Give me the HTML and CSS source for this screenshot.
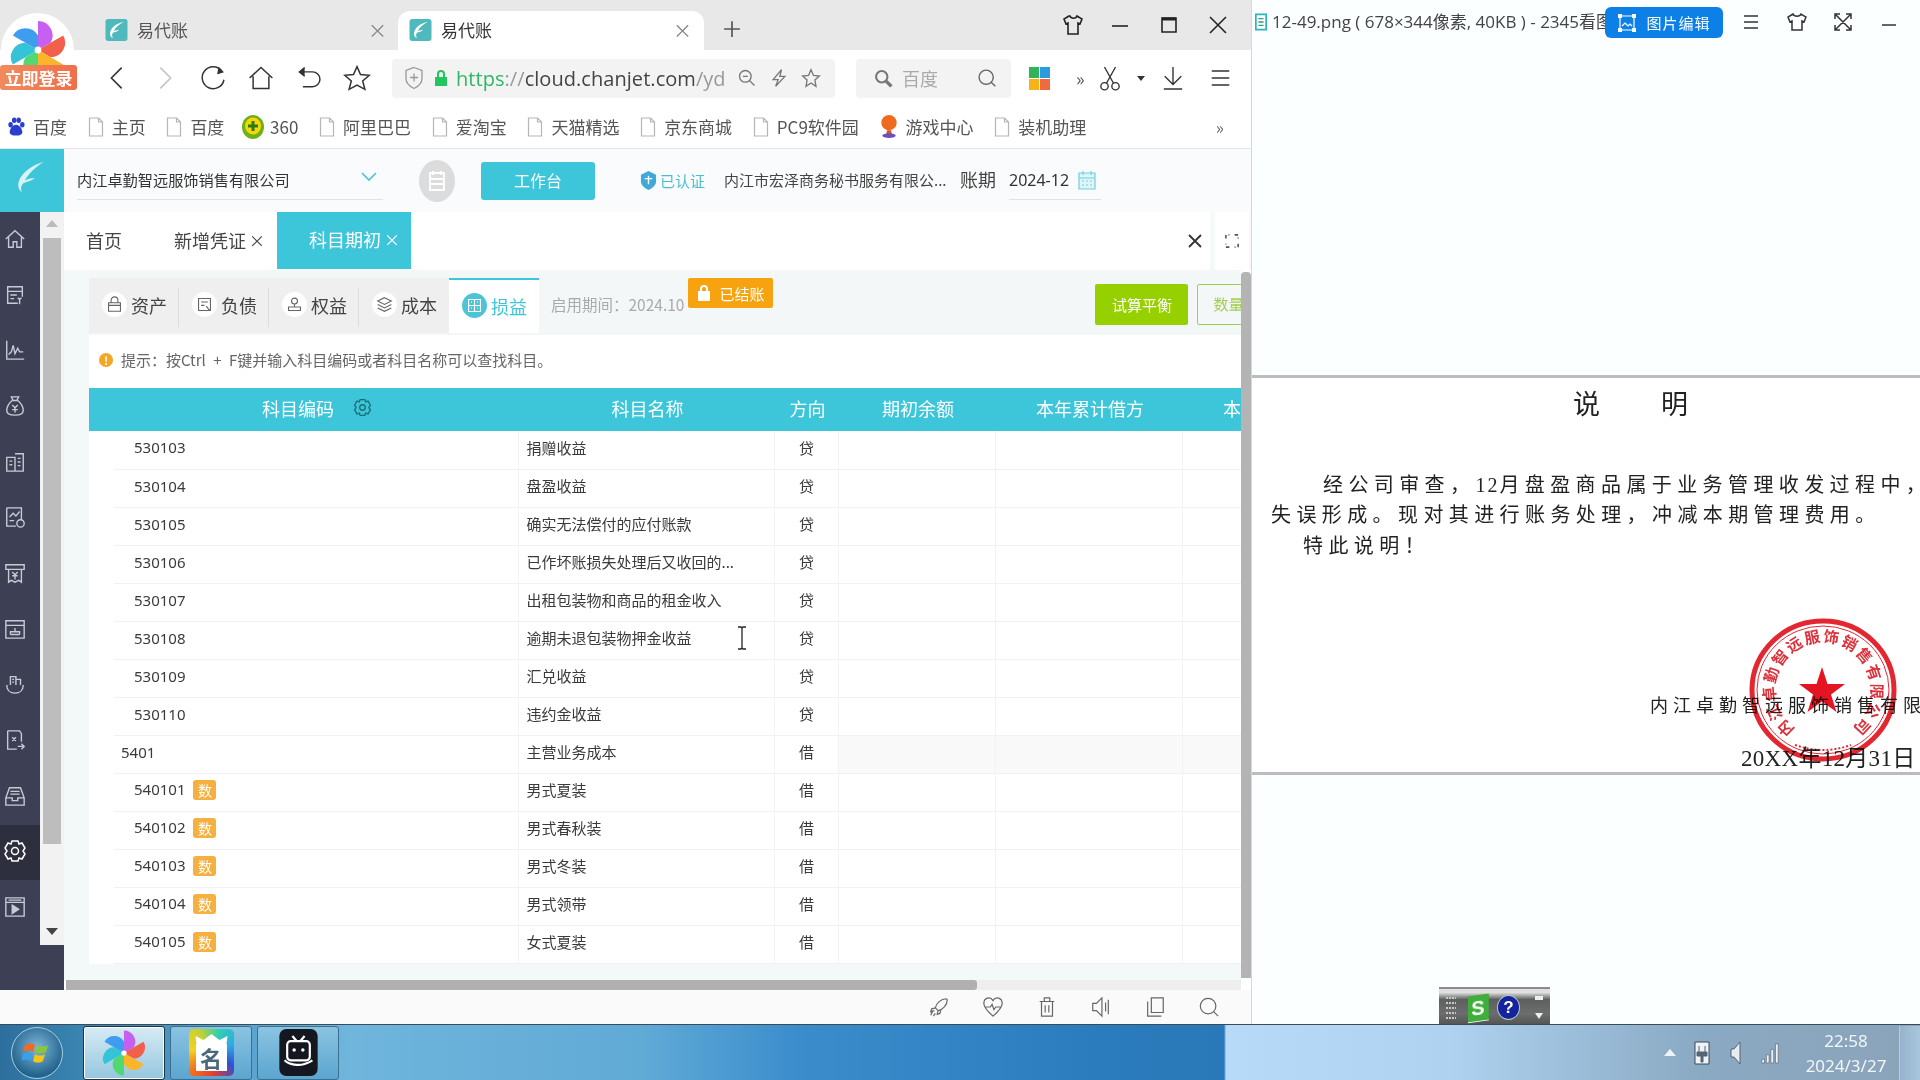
FILE: index.html
```html
<!DOCTYPE html>
<html lang="zh-CN">
<head>
<meta charset="utf-8">
<title>易代账</title>
<link rel="stylesheet" href="styles.css">
</head>
<body>
<svg class="defs" width="0" height="0" aria-hidden="true">
  <defs>
    <symbol id="feather" viewBox="0 0 24 24">
      <rect width="24" height="24" rx="3" fill="#4fb9bd"/>
      <path d="M20 3C12 5 6 9 5 15c-.4 3 1 5 3 6-1-2-1-4 0-6 2-1 5-1 7-3-2 0-4 .5-6 1 2-4 6-7 11-10z" fill="#fff"/>
    </symbol>
    <symbol id="doc" viewBox="0 0 16 20">
      <path d="M1.5 1h9l4 4v14h-13zM10.500 1v4h4" fill="#fff" stroke="#b5b5b5" stroke-width="1.200"/>
    </symbol>
    <symbol id="pinwheel" viewBox="-32 -32 64 64">
      <path d="M0 0L0-30A15 15 0 0 1 13-7.500Z" fill="#c75ff0"/>
      <path d="M0 0L0-30A15 15 0 0 1 13-7.500Z" fill="#f2604c" transform="rotate(60)"/>
      <path d="M0 0L0-30A15 15 0 0 1 13-7.500Z" fill="#fab52a" transform="rotate(120)"/>
      <path d="M0 0L0-30A15 15 0 0 1 13-7.500Z" fill="#52d873" transform="rotate(180)"/>
      <path d="M0 0L0-30A15 15 0 0 1 13-7.500Z" fill="#35c3d8" transform="rotate(240)"/>
      <path d="M0 0L0-30A15 15 0 0 1 13-7.500Z" fill="#3f9df0" transform="rotate(300)"/>
      <circle r="3.500" fill="#fff"/>
    </symbol>
  </defs>
</svg>

<div class="screen">
  <div class="desktop">
    <section class="browser">
      <header class="titlebar">
        <div class="btab">
          <svg class="btab-icon"><use href="#feather"/></svg>
          <span class="btab-title">易代账</span>
          <span class="btab-close">×</span>
        </div>
        <div class="btab btab-active">
          <svg class="btab-icon"><use href="#feather"/></svg>
          <span class="btab-title">易代账</span>
          <span class="btab-close">×</span>
        </div>
        <svg class="newtab" viewBox="0 0 16 16"><path d="M8 1v14M1 8h14"/></svg>
        <div class="winctl">
          <svg viewBox="0 0 22 22"><path d="M7 2 2 5l2 5 2-1v11h10V9l2 1 2-5-5-3c-1 3-6 3-7 0z"/></svg>
          <svg viewBox="0 0 22 22"><path d="M3 12h16"/></svg>
          <svg viewBox="0 0 22 22"><path d="M4 4h14v14H4z"/><path d="M4 5h14" stroke-width="3"/></svg>
          <svg viewBox="0 0 22 22"><path d="M3 3l16 16M19 3 3 19"/></svg>
        </div>
      </header>

      <div class="toolbar">
        <div class="navs">
          <svg viewBox="0 0 24 32"><path d="M17 5 6 16l11 11"/></svg>
          <svg class="nav-off" viewBox="0 0 24 32"><path d="M7 5l11 11L7 27"/></svg>
          <svg viewBox="0 0 32 32"><path d="M26 8a12.500 12.500 0 1 0 2.500 10"/><path d="M22 4l5 5-6 2" fill="#333"/></svg>
          <svg viewBox="0 0 32 32"><path d="M3 16 16 4l13 12M7 14v14h18V14"/></svg>
          <svg viewBox="0 0 32 32"><path d="M7 9h13a8 8 0 0 1 0 17H9"/><path d="M11 4 5 9l6 5" fill="#333"/></svg>
          <svg viewBox="0 0 32 32"><path d="M16 3l4 9 10 1-7.500 6.500L25 29l-9-5-9 5 2.500-9.500L2 13l10-1z"/></svg>
        </div>
        <div class="address">
          <svg class="addr-shield" viewBox="0 0 20 24"><path d="M10 1l8 3v8c0 5-4 8-8 10-4-2-8-5-8-10V4z"/><path d="M10 7v8M6 11h8"/></svg>
          <svg class="addr-lock" viewBox="0 0 14 18"><path d="M1 8h12v9H1z" fill="#22c55e" stroke="none"/><path d="M4 8V5a3 3 0 0 1 6 0v3" fill="none" stroke="#22c55e" stroke-width="2"/></svg>
          <span class="url"><span class="url-scheme">https</span><span class="url-dim">://</span>cloud.chanjet.com<span class="url-dim">/yd</span></span>
          <svg class="addr-ico" viewBox="0 0 24 24"><circle cx="10" cy="10" r="7"/><path d="M15 15l6 6M7 10h6"/></svg>
          <svg class="addr-ico" viewBox="0 0 24 24"><path d="M15 2 5 14h6l-3 8 11-12h-6z"/></svg>
          <svg class="addr-ico" viewBox="0 0 24 24"><path d="M12 2l3 7 7 .7-5.300 4.800L18 22l-6-4-6 4 1.300-7.500L2 9.700 9 9z"/></svg>
        </div>
        <div class="searchbox">
          <svg class="search-lead" viewBox="0 0 24 24"><circle cx="10" cy="10" r="6.500"/><path d="M15 15l6 6" stroke-width="4"/></svg>
          <span class="search-text">百度</span>
          <svg class="search-end" viewBox="0 0 24 24"><circle cx="11" cy="11" r="8.500"/><path d="M17 17l5 5"/></svg>
        </div>
        <div class="tools">
          <span class="apps"><i class="a1"></i><i class="a2"></i><i class="a3"></i><i class="a4"></i></span>
          <span class="more">»</span>
          <svg class="t-cut" viewBox="0 0 24 28"><circle cx="6" cy="23" r="4"/><circle cx="18" cy="23" r="4"/><path d="M8 20 18 2M16 20 6 2"/></svg>
          <span class="caret"></span>
          <svg class="t-dl" viewBox="0 0 24 28"><path d="M12 2v19M3 12l9 9 9-9M2 26h20"/></svg>
          <svg class="t-menu" viewBox="0 0 24 24"><path d="M2 4h20M2 12h20M2 20h20"/></svg>
        </div>
      </div>

      <nav class="bookmarks">
        <span class="bm"><svg class="bm-ico" viewBox="0 0 20 22"><g fill="#2a3fd0"><ellipse cx="4" cy="9" rx="2.500" ry="3"/><ellipse cx="8" cy="4" rx="2.500" ry="3"/><ellipse cx="13" cy="4" rx="2.500" ry="3"/><ellipse cx="17" cy="9" rx="2.500" ry="3"/><path d="M10 9c4 0 7 5 7 8s-3 4-7 4-7-1-7-4 3-8 7-8z"/></g></svg>百度</span>
        <span class="bm"><svg class="bm-doc"><use href="#doc"/></svg>主页</span>
        <span class="bm"><svg class="bm-doc"><use href="#doc"/></svg>百度</span>
        <span class="bm"><svg class="bm-360" viewBox="0 0 22 24"><ellipse cx="11" cy="12" rx="11" ry="12" fill="#6fb017"/><ellipse cx="11" cy="11" rx="8" ry="8.500" fill="#f5d80a"/><path d="M11 6v10M6 11h10" stroke="#2d7a12" stroke-width="3"/></svg>360</span>
        <span class="bm"><svg class="bm-doc"><use href="#doc"/></svg>阿里巴巴</span>
        <span class="bm"><svg class="bm-doc"><use href="#doc"/></svg>爱淘宝</span>
        <span class="bm"><svg class="bm-doc"><use href="#doc"/></svg>天猫精选</span>
        <span class="bm"><svg class="bm-doc"><use href="#doc"/></svg>京东商城</span>
        <span class="bm"><svg class="bm-doc"><use href="#doc"/></svg>PC9软件园</span>
        <span class="bm"><svg class="bm-ico" viewBox="0 0 18 24"><ellipse cx="9" cy="8" rx="8" ry="8" fill="#ee6a1f"/><path d="M7 16h4l1 4h-6z" fill="#d9531a"/><ellipse cx="9" cy="21.500" rx="7" ry="2.500" fill="#6a4fc0"/></svg>游戏中心</span>
        <span class="bm"><svg class="bm-doc"><use href="#doc"/></svg>装机助理</span>
        <span class="bm-more">»</span>
      </nav>

      <div class="app-header">
        <div class="app-logo">
          <svg viewBox="0 0 40 40"><path d="M33 2C20 6 8 14 5 25c-1 5 1 9 4 11-2-4-1-7 1-10 4-2 9-2 13-6-4 0-8 1-11 3 4-8 12-15 21-21z" fill="#d7f4f7"/></svg>
        </div>
        <div class="company">
          <span>内江卓勤智远服饰销售有限公司</span>
          <svg viewBox="0 0 16 10"><path d="M1 1l7 7 7-7"/></svg>
        </div>
        <span class="note-ico"><svg viewBox="0 0 20 24"><path d="M3 4h14v17H3zM3 10h14M3 15h14M6 2v4M14 2v4"/></svg></span>
        <span class="workbench">工作台</span>
        <svg class="cert-ico" viewBox="0 0 18 20"><path d="M9 0l8 4v7c0 4-4 7-8 9-4-2-8-5-8-9V4z" fill="#3fa9d8"/><path d="M5 8h8M9 5v9" stroke="#fff" stroke-width="1.500"/></svg>
        <span class="cert">已认证</span>
        <span class="agent">内江市宏泽商务秘书服务有限公...</span>
        <span class="period-l">账期</span>
        <div class="period">
          <span>2024-12</span>
          <svg viewBox="0 0 18 20"><path d="M1 3h16v16H1zM1 8h16M5 1v4M13 1v4M4 11h2M8 11h2M12 11h2M4 15h2M8 15h2M12 15h2"/></svg>
        </div>
      </div>

      <div class="app-body">
        <aside class="sidebar">
          <div class="side-top">
            <div class="side-icons">
              <span class="si"><svg viewBox="0 0 24 24"><path d="M2 12 12 3l10 9M5 10v11h5v-6h4v6h5V10"/></svg></span>
              <span class="si"><svg viewBox="0 0 24 24"><path d="M4 3h16v5H4zM4 8v13h11M20 8v6M7 12h7M7 16h4M15 15l2 2 2-2M17 17v5"/></svg></span>
              <span class="si"><svg viewBox="0 0 24 24"><path d="M3 2v20h19M5 17l3-3 2-7 2 9 3-6 2 4h4"/></svg></span>
              <span class="si"><svg viewBox="0 0 24 24"><path d="M8 2h8l-2 4h-4zM9 6C4 10 3 14 3 17c0 3 3 5 9 5s9-2 9-5c0-3-1-7-6-11M9 11l3 3 3-3M12 14v5M9 16h6"/></svg></span>
              <span class="si"><svg viewBox="0 0 24 24"><path d="M3 7h9v15H3zM12 3h9v19h-9M6 11h3M6 15h3M15 8h3M15 12h3M15 16h3"/></svg></span>
              <span class="si"><svg viewBox="0 0 24 24"><path d="M3 2h16v13M3 2v20h10M6 12l4-4 3 3 4-5M6 16h5"/><circle cx="18" cy="19" r="4"/></svg></span>
              <span class="si"><svg viewBox="0 0 24 24"><path d="M2 3h20v5H2zM5 8v14l3-2 4 2 4-2 3 2V8M9 11l3 3 3-3M12 14v5M9 15h6"/></svg></span>
              <span class="si"><svg viewBox="0 0 24 24"><path d="M2 3h20v19H2zM2 8h20M12 11v4M7 18h10M7 18v-3h10v3"/></svg></span>
              <span class="si"><svg viewBox="0 0 24 24"><path d="M3 13c0 6 4 9 9 9s9-3 9-9M7 13V4h6v9M13 7h5v6M9 7h2M9 10h2"/></svg></span>
              <span class="si"><svg viewBox="0 0 24 24"><path d="M4 2h13l2 3v9M4 2v20h10M9 9l4 4M13 9l-4 4M15 19h7M19 16l3 3-3 3"/></svg></span>
              <span class="si"><svg viewBox="0 0 24 24"><path d="M6 3h12l4 11v8H2v-8zM2 14h7v3h6v-3h7M7 7h10M7 10h10"/></svg></span>
              <span class="si si-active"><svg viewBox="0 0 24 24"><path d="M9 2h6l1 3 3-1 3 5-2 3 2 3-3 5-3-1-1 3H9l-1-3-3 1-3-5 2-3-2-3 3-5 3 1z"/><circle cx="12" cy="12" r="3.500"/></svg></span>
              <span class="si"><svg viewBox="0 0 24 24"><path d="M2 2h20v20H2zM2 7h20M5 4.500h14" /><path d="M9 10l7 4.500L9 19z" fill="#c7cbd6"/></svg></span>
            </div>
            <div class="side-scroll">
              <span class="tri-up"></span>
              <span class="side-thumb"></span>
              <span class="tri-down"></span>
            </div>
          </div>
        </aside>

        <main class="app-main">
          <div class="pagetabs">
            <span class="ptab">首页</span>
            <span class="ptab ptab-new">新增凭证<b>×</b></span>
            <span class="ptab ptab-active">科目期初<b>×</b></span>
            <div class="ptab-tools">
              <span class="pt-box"><svg viewBox="0 0 14 14"><path d="M1 1l12 12M13 1 1 13"/></svg></span>
              <span class="pt-box pt-box2"><svg viewBox="0 0 16 16"><path d="M1 5V1h4M11 1h4v4M15 11v4h-4M5 15H1v-4"/></svg></span>
            </div>
          </div>

          <div class="content-row">
            <div class="pane">
              <div class="subbar">
                <div class="subtabs">
                  <span class="st"><i class="st-ico"><svg viewBox="0 0 20 20"><path d="M3 8h14v10H3zM6 8V5a4 4 0 0 1 8 0v3M3 11h14"/></svg></i>资产</span>
                  <span class="st"><i class="st-ico"><svg viewBox="0 0 20 20"><path d="M3 3h14v14H3zM6 7h8M6 11h4M12 12l4 5"/></svg></i>负债</span>
                  <span class="st"><i class="st-ico"><svg viewBox="0 0 20 20"><circle cx="10" cy="6" r="3.500"/><path d="M10 10v3M3 13h14v4H3z"/></svg></i>权益</span>
                  <span class="st"><i class="st-ico"><svg viewBox="0 0 20 20"><path d="M10 2l8 4-8 4-8-4zM2 10l8 4 8-4M2 14l8 4 8-4"/></svg></i>成本</span>
                  <span class="st st-active"><i class="st-ico"><svg viewBox="0 0 20 20"><path d="M3 3h14v14H3zM3 10h14M10 3v14M6 6h1M13 6h1M6 13h1M13 13h1"/></svg></i>损益</span>
                </div>
                <span class="since">启用期间：2024.10</span>
                <span class="closed"><svg viewBox="0 0 14 18"><path d="M1 7h12v10H1z" fill="#fff"/><path d="M4 7V5a3 3 0 0 1 6 0v2" fill="none" stroke="#fff" stroke-width="2"/></svg>已结账</span>
                <span class="btn-trial">试算平衡</span>
                <span class="btn-qty">数量</span>
              </div>
              <p class="hint"><i class="hint-ico">!</i>提示：按Ctrl + F键并输入科目编码或者科目名称可以查找科目。</p>
              <table class="grid">
                <colgroup><col class="c0"><col class="c1"><col class="c2"><col class="c3"><col class="c4"><col class="c5"><col class="c6"></colgroup>
                <thead>
                  <tr>
                    <th colspan="2"><span class="th-code">科目编码<svg viewBox="0 0 24 24"><path d="M9 2h6l1 3 3-1 3 5-2 3 2 3-3 5-3-1-1 3H9l-1-3-3 1-3-5 2-3-2-3 3-5 3 1z"/><circle cx="12" cy="12" r="3.500"/></svg></span></th>
                    <th>科目名称</th><th>方向</th><th>期初余额</th><th>本年累计借方</th><th>本年累计贷方</th>
                  </tr>
                </thead>
                <tbody>
                  <tr><td></td><td class="code sub">530103</td><td>捐赠收益</td><td class="dir">贷</td><td></td><td></td><td></td></tr>
                  <tr><td></td><td class="code sub">530104</td><td>盘盈收益</td><td class="dir">贷</td><td></td><td></td><td></td></tr>
                  <tr><td></td><td class="code sub">530105</td><td>确实无法偿付的应付账款</td><td class="dir">贷</td><td></td><td></td><td></td></tr>
                  <tr><td></td><td class="code sub">530106</td><td>已作坏账损失处理后又收回的...</td><td class="dir">贷</td><td></td><td></td><td></td></tr>
                  <tr><td></td><td class="code sub">530107</td><td>出租包装物和商品的租金收入</td><td class="dir">贷</td><td></td><td></td><td></td></tr>
                  <tr><td></td><td class="code sub">530108</td><td>逾期未退包装物押金收益</td><td class="dir">贷</td><td></td><td></td><td></td></tr>
                  <tr><td></td><td class="code sub">530109</td><td>汇兑收益</td><td class="dir">贷</td><td></td><td></td><td></td></tr>
                  <tr><td></td><td class="code sub">530110</td><td>违约金收益</td><td class="dir">贷</td><td></td><td></td><td></td></tr>
                  <tr class="parent"><td></td><td class="code">5401</td><td>主营业务成本</td><td class="dir">借</td><td></td><td></td><td></td></tr>
                  <tr><td></td><td class="code sub">540101<span class="tag">数</span></td><td>男式夏装</td><td class="dir">借</td><td></td><td></td><td></td></tr>
                  <tr><td></td><td class="code sub">540102<span class="tag">数</span></td><td>男式春秋装</td><td class="dir">借</td><td></td><td></td><td></td></tr>
                  <tr><td></td><td class="code sub">540103<span class="tag">数</span></td><td>男式冬装</td><td class="dir">借</td><td></td><td></td><td></td></tr>
                  <tr><td></td><td class="code sub">540104<span class="tag">数</span></td><td>男式领带</td><td class="dir">借</td><td></td><td></td><td></td></tr>
                  <tr><td></td><td class="code sub">540105<span class="tag">数</span></td><td>女式夏装</td><td class="dir">借</td><td></td><td></td><td></td></tr>
                </tbody>
              </table>
            </div>
            <div class="vscroll"><span></span></div>
          </div>
          <div class="hscroll"><span></span></div>
        </main>
      </div>

      <footer class="statusbar">
        <svg viewBox="0 0 24 24"><path d="M20 3c-6 0-11 5-12 10l3 3c5-1 10-6 10-12zM8 13l-4 1-1 3 4-1M11 16l-1 4 3-1 1-4M5 17l-2 4M8 19l-2 3"/></svg>
        <svg viewBox="0 0 24 24"><path d="M12 22C5 16 2 12 2 8c0-6 7-8 10-3 3-5 10-3 10 3 0 4-3 8-10 14zM3 12h6l2-3 2 6 2-3h6"/></svg>
        <svg viewBox="0 0 24 24"><path d="M4 6h16M9 6V2h6v4M6 6v16h12V6M10 10v8M14 10v8"/></svg>
        <svg viewBox="0 0 24 24"><path d="M3 8h4l6-6v20l-6-6H3zM17 7v10M20 4v16"/></svg>
        <svg viewBox="0 0 24 24"><path d="M8 2h13v16H8zM4 6v16h15"/></svg>
        <svg viewBox="0 0 24 24"><circle cx="11" cy="11" r="8.500"/><path d="M17 17l5 5"/></svg>
      </footer>
    </section>

    <section class="viewer">
      <header class="viewer-bar">
        <svg class="v-file" viewBox="0 0 14 20"><path d="M1 1h12v18H1z" fill="#fff" stroke="#2bb5c0" stroke-width="2"/><path d="M4 6h6M4 10h6M4 14h6" stroke="#3a9b7a" stroke-width="1.500"/></svg>
        <span class="v-title">12-49.png ( 678×344像素, 40KB ) - 2345看图王</span>
        <span class="v-edit"><svg viewBox="0 0 20 20"><path d="M3 3h14v14H3zM5 13l3-3 3 3 2-2 2 2"/><g fill="#fff" stroke="none"><rect x="1" y="1" width="4" height="4"/><rect x="15" y="1" width="4" height="4"/><rect x="1" y="15" width="4" height="4"/><rect x="15" y="15" width="4" height="4"/></g></svg>图片编辑</span>
        <div class="v-ctl">
          <svg viewBox="0 0 20 20"><path d="M3 4h14M3 10h14M3 16h14"/></svg>
          <svg viewBox="0 0 20 20"><path d="M6 2 1 5l2 5 2-1v9h10V9l2 1 2-5-5-3c-1 3-7 3-8 0z"/></svg>
          <svg viewBox="0 0 20 20"><path d="M3 3l14 14M17 3 3 17M2 7V2h5M13 2h5v5M18 13v5h-5M7 18H2v-5"/></svg>
          <svg viewBox="0 0 20 20"><path d="M3 13h14"/></svg>
        </div>
      </header>
      <article class="doc">
        <h1 class="doc-title">说<span class="doc-gap"></span>明</h1>
        <p class="doc-p1">经公司审查，<span class="doc-num">12</span>月盘盈商品属于业务管理收发过程中，</p>
        <p class="doc-p2">失误形成。现对其进行账务处理，冲减本期管理费用。</p>
        <p class="doc-p3">特此说明！</p>
        <p class="doc-sign">内江卓勤智远服饰销售有限公司</p>
        <p class="doc-date">20XX年12月31日</p>
        <svg class="stamp" viewBox="0 0 150 146">
          <defs><path id="stamp-arc" d="M47.400 112.300A48 48 0 1 1 102.600 112.300"/></defs>
          <ellipse cx="75" cy="73" rx="71" ry="69" fill="none" stroke="#e0141e" stroke-width="5"/>
          <ellipse cx="75" cy="73" rx="66" ry="64" fill="none" stroke="#e0141e" stroke-width="1"/>
          <text class="stamp-text"><textPath href="#stamp-arc" textLength="240">内江卓勤智远服饰销售有限公司</textPath></text>
          <path d="M74 50l5.500 17H97L83 77.500 88.500 95 74 84.500 59.500 95 65 77.500 51 67h17.500z" fill="#e3000f"/>
          <path d="M47 128q28 10 56 0" fill="none" stroke="#e0141e" stroke-width="2" stroke-dasharray="2 2"/>
        </svg>
      </article>
    </section>

    <div class="imebar">
      <svg class="ime-grip" viewBox="0 0 12 24"><path d="M1 2h10M1 7h10M1 12h10M1 17h10M1 22h10" stroke="#c8c8c8" stroke-width="2" stroke-dasharray="2 1"/></svg>
      <span class="ime-s">S</span>
      <span class="ime-q">?</span>
      <span class="ime-ctl"><i class="ime-dash"></i><i class="ime-tri"></i></span>
    </div>

    <div class="login-bubble">
      <svg class="bubble-wheel"><use href="#pinwheel"/></svg>
      <span class="bubble-tag">立即登录</span>
    </div>

    <svg class="ibeam" viewBox="0 0 12 24"><path d="M2 1h3l1 1 1-1h3M6 2v20M2 23h3l1-1 1 1h3"/></svg>
  </div>

  <footer class="taskbar">
    <div class="orb">
      <svg viewBox="0 0 30 30"><path d="M3 7c4-2 7-2 10 0l-2 7c-3-2-6-2-10 0z" fill="#ef6a22"/><path d="M15 7c3 2 7 2 11 0l-2 7c-4 2-8 2-11 0z" fill="#8cc63f"/><path d="M1 16c4-2 7-2 10 0l-2 7c-3-2-6-2-10 0z" fill="#3aa0e8"/><path d="M13 16c3 2 7 2 10 0l-2 7c-3 2-7 2-10 0z" fill="#f5c518"/></svg>
    </div>
    <span class="task task-active"><svg class="task-wheel"><use href="#pinwheel"/></svg></span>
    <span class="task"><span class="task-ming"><svg viewBox="0 0 32 10"><path d="M1 10 0 2l8 4 8-6 8 6 8-4-1 8z" fill="#fff"/></svg><span class="ming-text">名</span></span></span>
    <span class="task"><svg class="task-bili" viewBox="0 0 44 54"><rect width="44" height="54" rx="8" fill="#14171f"/><path d="M13 14h18a4 4 0 0 1 4 4v14a4 4 0 0 1-4 4H13a4 4 0 0 1-4-4V18a4 4 0 0 1 4-4zM15 8l5 6M29 8l-5 6M6 36c6 6 20 8 32 0" fill="none" stroke="#fff" stroke-width="2.500"/><circle cx="17" cy="24" r="2" fill="#fff"/><circle cx="27" cy="24" r="2" fill="#fff"/></svg></span>
    <div class="tray">
      <span class="tri-tray"></span>
      <svg viewBox="0 0 20 28"><path d="M3 3h14v22H3z" fill="#eef3f7" stroke="#3c4a55"/><path d="M7 7v6M13 7v6M5 13h10v4h-4v6H9v-6H5z" fill="#546575" stroke="#546575"/></svg>
      <svg viewBox="0 0 20 28"><path d="M5 10h3l6-7v22l-6-7H5z" fill="#e6edf2" stroke="#55626d"/></svg>
      <svg viewBox="0 0 22 28"><path d="M2 21h3v4H2zM7 16h3v9H7zM12 10h3v15h-3zM17 4h3v21h-3z" fill="#eef3f7" stroke="#55626d" stroke-width=".7"/></svg>
      <div class="clock"><span>22:58</span><span>2024/3/27</span></div>
      <span class="show-desktop"></span>
    </div>
  </footer>
</div>
</body>
</html>
```

FILE: styles.css
```css
* { box-sizing: border-box; }
html, body { margin: 0; padding: 0; width: 1920px; height: 1080px; overflow: hidden; }
body { font-family: "Noto Sans CJK SC", "Noto Sans", sans-serif; color: #333; background: #fff; }
svg { display: block; flex: none; }
i { font-style: normal; }
p, h1 { margin: 0; }
.defs { position: absolute; }

.screen { display: flex; flex-direction: column; width: 1920px; height: 1080px; }
.desktop { position: relative; display: flex; height: 1024px; flex: none; }

/* browser window */
.browser { width: 1251px; flex: none; display: flex; flex-direction: column; background: #fff; }
.titlebar { height: 50px; flex: none; display: flex; align-items: flex-end; padding-left: 104px; background: #e8e8e8; }
.btab { display: flex; align-items: center; height: 39px; width: 294px; padding: 0 0 2px 1px; font-size: 17px; color: #555; }
.btab-active { width: 306px; padding-left: 11px; background: #fff; border-radius: 12px 12px 0 0; }
.btab-icon { width: 23px; height: 22px; margin-right: 9px; }
.btab-title { flex: 1; }
.btab-close { font-size: 19px; color: #888; line-height: 1; margin-right: 11px; }
.btab-active .btab-close { margin-right: 12px; }
.btab-active .btab-title { color: #333; }
.newtab { width: 18px; height: 18px; margin: 0 0 12px 19px; fill: none; stroke: #555; stroke-width: 1.500; }
.winctl { margin-left: auto; display: flex; gap: 27px; padding-right: 22px; align-self: center; }
.winctl svg { width: 22px; height: 22px; fill: none; stroke: #222; stroke-width: 1.600; }
.winctl svg:first-child { margin-left: 2px; margin-right: -2px; }

.toolbar { height: 63px; flex: none; display: flex; align-items: center; padding: 9px 0 16px; background: #fff; }
.navs { display: flex; align-items: center; width: 392px; padding-left: 103px; gap: 20px; }
.navs svg { width: 28px; height: 30px; fill: none; stroke: #333; stroke-width: 1.700; }
.navs .nav-off { stroke: #c4c4c4; }
.address { width: 443px; height: 39px; display: flex; align-items: center; padding-left: 12px; background: #f3f3f3; border-radius: 4px; overflow: hidden; }
.addr-shield { width: 20px; height: 25px; fill: none; stroke: #999; stroke-width: 1.300; margin-right: 10px; }
.addr-lock { width: 14px; height: 18px; margin-right: 8px; }
.url { font-size: 20px; font-family: "Open Sans", sans-serif; color: #444; width: 269px; white-space: nowrap; overflow: hidden; letter-spacing: .05px; }
.url-scheme { color: #2fb765; }
.url-dim { color: #999; }
.addr-ico { width: 20px; height: 20px; margin-left: 12px; fill: none; stroke: #777; stroke-width: 1.600; }
.searchbox { width: 155px; height: 39px; margin-left: 21px; display: flex; align-items: center; padding: 0 14px 0 17px; background: #f3f3f3; border-radius: 4px; }
.search-lead { width: 21px; height: 21px; fill: none; stroke: #777; stroke-width: 2.400; }
.search-text { margin-left: 8px; font-size: 18px; color: #aaa; flex: 1; }
.search-end { width: 20px; height: 20px; fill: none; stroke: #666; stroke-width: 1.700; }
.tools { display: flex; align-items: center; padding-left: 18px; }
.apps { display: grid; grid-template-columns: 10px 10px; grid-template-rows: 11px 11px; gap: 1px; width: 21px; }
.a1 { background: #2fb457; } .a2 { background: #2b9ae0; } .a3 { background: #f7b21a; } .a4 { background: #ef6a3c; }
.more { margin-left: 26px; font-size: 18px; color: #555; }
.t-cut { width: 22px; height: 28px; margin-left: 14px; fill: none; stroke: #333; stroke-width: 1.500; }
.caret { width: 0; height: 0; margin-left: 16px; border: 4px solid transparent; border-top: 5px solid #333; border-bottom: 0; }
.t-dl { width: 22px; height: 28px; margin-left: 17px; fill: none; stroke: #333; stroke-width: 1.500; }
.t-menu { width: 21px; height: 24px; margin-left: 26px; fill: none; stroke: #333; stroke-width: 1.500; }

.bookmarks { height: 36px; flex: none; display: flex; align-items: center; gap: 20.700px; padding: 0 0 8px 7px; border-bottom: 1px solid #e6e6e6; font-size: 17px; color: #555; background: #fff; }
.bm { display: flex; align-items: center; gap: 8px; white-space: nowrap; }
.bm-ico { width: 18px; height: 23px; }
.bm-doc { width: 16px; height: 20px; }
.bm-360 { width: 22px; height: 24px; margin-left: -3px; margin-right: -2px; }
.bm-more { margin-left: auto; margin-right: 27px; color: #666; }

.app-header { height: 63px; flex: none; display: flex; align-items: center; background: #f9fbfc; }
.app-logo { width: 64px; height: 63px; flex: none; background: #3dc6d9; display: flex; align-items: center; justify-content: center; padding-bottom: 6px; }
.app-logo svg { width: 36px; height: 40px; }
.company { width: 306px; height: 40px; align-self: flex-start; margin: 11px 0 0 13px; display: flex; align-items: center; border-bottom: 1px solid #dfe3e6; font-size: 15.200px; color: #333; }
.company span { flex: 1; padding-bottom: 2px; }
.company svg { width: 16px; height: 10px; margin: 0 6px 6px 0; fill: none; stroke: #4cc4d6; stroke-width: 1.600; }
.note-ico { width: 36px; height: 42px; margin-left: 36px; border-radius: 50%; background: #dcdcdc; display: flex; align-items: center; justify-content: center; }
.note-ico svg { width: 20px; height: 24px; fill: none; stroke: #fff; stroke-width: 1.800; }
.workbench { width: 114px; height: 38px; margin-left: 26px; padding-bottom: 2px; border-radius: 3px; background: #3dc6d9; color: #fff; font-size: 16px; display: flex; align-items: center; justify-content: center; }
.cert-ico { width: 17px; height: 19px; margin-left: 45px; }
.cert { width: 64px; margin-left: 3px; font-size: 15px; color: #4bbdd2; }
.agent { width: 236px; font-size: 15px; color: #444; white-space: nowrap; padding-bottom: 2px; }
.period-l { width: 49px; font-size: 18px; color: #444; padding-bottom: 3px; }
.period { width: 92px; height: 40px; align-self: flex-start; margin-top: 11px; display: flex; align-items: center; gap: 9px; border-bottom: 1px solid #dfe3e6; font-size: 16px; color: #333; font-family: "Noto Sans", sans-serif; white-space: nowrap; }
.period svg { width: 18px; height: 20px; fill: #dff5f8; stroke: #6fd0dd; stroke-width: 1.200; }

.app-body { height: 778px; flex: none; display: flex; }
.sidebar { width: 64px; flex: none; background: #3d4055; padding-bottom: 45px; display: flex; }
.side-top { flex: 1; display: flex; }
.side-icons { width: 40px; flex: none; display: flex; flex-direction: column; }
.si { height: 55.700px; flex: none; display: flex; align-items: center; justify-content: center; }
.si svg { width: 22px; height: 22px; fill: none; stroke: #c7cbd6; stroke-width: 1.500; margin: 0 10px 2px 0; }
.si-active { background: #2d2f3e; }
.si-active svg { stroke: #fff; width: 24px; height: 24px; }
.side-scroll { width: 24px; flex: none; background: #f2f2f2; display: flex; flex-direction: column; align-items: center; padding-top: 8px; }
.tri-up { width: 0; height: 0; border: 6px solid transparent; border-bottom: 7px solid #bbb; border-top: 0; margin-bottom: 11px; }
.side-thumb { width: 18px; height: 606px; background: #bdbdbd; }
.tri-down { width: 0; height: 0; border: 6px solid transparent; border-top: 7px solid #444; border-bottom: 0; margin-top: 84px; }

.app-main { flex: 1; min-width: 0; display: flex; flex-direction: column; background: #fff; }
.pagetabs { height: 58px; flex: none; display: flex; align-items: stretch; padding-left: 22px; font-size: 18px; color: #444; }
.ptab { display: flex; align-items: center; padding-bottom: 3px; white-space: nowrap; }
.ptab b { font-weight: 400; margin-left: 3px; font-size: 16px; }
.ptab-new { margin-left: 52px; }
.ptab-active { width: 134px; height: 57px; margin-left: 12px; padding-left: 32px; background: #3dc6d9; color: #fff; }
.ptab-tools { margin-left: auto; display: flex; gap: 5px; padding-right: 2px; background: #f6f9f9; }
.pt-box { width: 30px; background: #fff; display: flex; align-items: center; justify-content: center; }
.pt-box svg { width: 14px; height: 14px; fill: none; stroke: #333; stroke-width: 1.800; }
.pt-box2 { width: 34px; }
.pt-box2 svg { stroke: #555; stroke-dasharray: 4 3; }

.content-row { height: 710px; flex: none; display: flex; background: #f3f8f8; }
.pane { width: 1177px; flex: none; padding-left: 25px; overflow: hidden; }
.subbar { height: 65px; display: flex; align-items: flex-start; background: #f4f7f8; padding-top: 8px; }
.subtabs { display: flex; width: 449px; height: 55px; flex: none; background: #efefef; }
.st { width: 90px; flex: none; display: flex; align-items: center; gap: 4px; padding: 0 0 2px 13px; font-size: 18px; color: #444; position: relative; }
.st:not(.st-active)::after { content: ""; position: absolute; right: 0; top: 10px; bottom: 6px; width: 1px; background: #dcdcdc; }
.st:nth-child(4)::after { display: none; }
.st-ico { width: 25px; height: 25px; flex: none; border-radius: 50%; background: #fff; display: flex; align-items: center; justify-content: center; }
.st-ico svg { width: 17px; height: 17px; fill: none; stroke: #666; stroke-width: 1.300; }
.st-active { background: #fff; border-top: 2px solid #3dc6d9; color: #3dc6d9; }
.st-active .st-ico { background: #4cc4d6; }
.st-active .st-ico svg { stroke: #fff; }
.since { margin-left: 13px; font-size: 15.500px; color: #aaa; width: 137px; padding-top: 15px; white-space: nowrap; }
.closed { width: 85px; height: 30px; margin-left: 4px; flex: none; background: #f7a20f; color: #fff; border-radius: 2px; font-size: 15px; display: flex; align-items: center; justify-content: center; gap: 8px; }
.closed svg { width: 14px; height: 18px; }
.btn-trial { width: 93px; height: 41px; margin: 6px 0 0 322px; flex: none; background: #97d000; color: #fff; border-radius: 2px; font-size: 15px; display: flex; align-items: center; justify-content: center; }
.btn-qty { width: 60px; height: 41px; margin: 6px 0 0 9px; flex: none; border: 1px solid #a3cf50; border-radius: 2px; color: #a3cf50; font-size: 15px; padding: 8px 0 0 15px; white-space: nowrap; }
.hint { height: 53px; display: flex; align-items: center; background: #fff; padding: 0 0 4px 10px; font-size: 15px; word-spacing: 4px; color: #666; white-space: nowrap; }
.hint-ico { width: 14px; height: 14px; margin-right: 8px; border-radius: 50%; background: #f5a623; color: #fff; font-size: 11px; font-weight: 700; display: flex; align-items: center; justify-content: center; }

.grid { table-layout: fixed; width: 1280px; border-collapse: collapse; background: #fff; font-size: 15px; color: #3a3a3a; }
.c0 { width: 25px; } .c1 { width: 404px; } .c2 { width: 256px; } .c3 { width: 64px; } .c4 { width: 157px; } .c5 { width: 187px; } .c6 { width: 187px; }
.grid th { height: 43px; padding: 0 0 4px 3px; background: #3dc6d9; color: #fff; font-size: 18px; font-weight: 400; white-space: nowrap; overflow: hidden; }
.th-code { display: flex; align-items: center; justify-content: center; gap: 19px; padding-left: 24px; }
.th-code svg { width: 19px; height: 19px; fill: none; stroke: #1d6d7a; stroke-width: 1.700; }
.grid td { height: 38px; padding: 0 0 5px 8px; border-bottom: 1px solid #f1f1f1; border-right: 1px solid #f3f3f3; white-space: nowrap; overflow: visible; }
.grid td:first-child { border-bottom: 0; border-right: 0; padding: 0; }
.grid td.code { font-family: "Noto Sans", sans-serif; padding-left: 7px; }
.grid td.sub { padding-left: 20px; }
.grid td.dir { padding: 0 0 5px 1px; text-align: center; }
.grid .parent td:nth-child(n+5) { background: #f9f9f9; }
.tag { display: inline-block; width: 23px; height: 20px; margin-left: 8px; vertical-align: -1px; background: #f5b040; color: #fff; font-family: "Noto Sans CJK SC", sans-serif; font-size: 14px; line-height: 20px; text-align: center; border-radius: 3px; }

.vscroll { width: 10px; flex: none; background: #fff; padding-top: 2px; }
.vscroll span { display: block; height: 706px; background: #b4b4b4; border-radius: 4px 4px 0 0; }
.hscroll { height: 10px; flex: none; padding: 0 10px 0 2px; background: linear-gradient(#eee, #eee) no-repeat 2px 0 / 1175px 10px; }
.hscroll span { display: block; width: 911px; height: 10px; background: #b0b0b0; border-radius: 0 3px 3px 0; }

.statusbar { height: 34px; flex: none; display: flex; align-items: center; padding-left: 928px; gap: 32px; background: #fafafa; }
.statusbar svg { width: 22px; height: 22px; fill: none; stroke: #666; stroke-width: 1.300; }

/* image viewer */
.viewer { flex: 1; min-width: 0; background: #fbffff; border-left: 1px solid #d7d7d7; overflow: hidden; }
.viewer-bar { height: 375px; display: flex; align-items: flex-start; padding: 7px 0 0 3px; }
.v-file { width: 12px; height: 20px; margin-top: 5px; }
.v-title { width: 339px; margin: 1px 0 0 5px; overflow: hidden; white-space: nowrap; font-size: 17px; color: #444; font-family: "Open Sans", "Noto Sans CJK SC", sans-serif; }
.v-edit { width: 118px; height: 31px; margin-left: -6px; flex: none; background: #0d80e8; border-radius: 6px; color: #fff; font-size: 15px; letter-spacing: 1px; display: flex; align-items: center; justify-content: center; gap: 9px; }
.v-edit svg { width: 20px; height: 20px; fill: none; stroke: #fff; stroke-width: 1.200; }
.v-ctl { display: flex; gap: 26px; margin: 5px 0 0 18px; }
.v-ctl svg { width: 20px; height: 20px; fill: none; stroke: #333; stroke-width: 1.500; }

.doc { position: relative; height: 400px; background: #fff; border-top: 3px solid #bcbcbc; border-bottom: 3px solid #bcbcbc; font-family: "Liberation Serif", "Noto Sans CJK SC", serif; color: #222; white-space: nowrap; overflow: hidden; }
.doc-title { font-size: 27px; font-weight: 400; line-height: 38px; padding: 8px 0 0 321px; }
.doc-gap { display: inline-block; width: 61px; }
.doc-p1, .doc-p2, .doc-p3 { font-size: 20px; letter-spacing: 5.400px; line-height: 30px; }
.doc-num { letter-spacing: 2px; }
.doc-p1 { padding: 46px 0 0 71px; }
.doc-p2 { padding: 0 0 0 19px; }
.doc-p3 { padding: 1px 0 0 51px; }
.doc-sign { font-size: 18px; letter-spacing: 5px; line-height: 30px; padding: 130px 0 0 398px; }
.doc-date { font-size: 23px; letter-spacing: .3px; line-height: 32px; padding: 22px 0 0 489px; }
.stamp { position: absolute; left: 496px; top: 239px; width: 150px; height: 146px; mix-blend-mode: multiply; opacity: .92; }
.stamp-text { font-size: 15.500px; font-weight: 700; fill: #d9202a; font-family: "Noto Sans CJK SC", sans-serif; }

/* overlays */
.imebar { position: absolute; left: 1439px; top: 987px; width: 111px; height: 37px; display: flex; align-items: center; padding: 2px 0 0 6px; background: linear-gradient(#e0e0e0 0, #e0e0e0 10%, #5e605f 30%, #6c6e6d 70%, #555 100%); border-top: 2px solid #8c8c8c; }
.ime-grip { width: 12px; height: 24px; }
.ime-s { width: 20px; height: 26px; margin-left: 11px; background: #3fae3a; color: #fff; font-family: "Liberation Sans", sans-serif; font-size: 20px; font-weight: 700; line-height: 26px; text-align: center; transform: skewY(-8deg); }
.ime-q { width: 23px; height: 25px; margin-left: 9px; border-radius: 50%; background: #13249c; border: 1px solid #bcc; color: #fff; font-family: "Liberation Sans", sans-serif; font-size: 17px; font-weight: 700; line-height: 23px; text-align: center; }
.ime-ctl { margin-left: 15px; display: flex; flex-direction: column; align-items: center; gap: 13px; }
.ime-dash { width: 8px; height: 4px; background: #eee; }
.ime-tri { width: 0; height: 0; border: 4px solid transparent; border-top: 6px solid #eee; border-bottom: 0; }

.login-bubble { position: absolute; left: 0; top: 13px; width: 77px; height: 77px; }
.login-bubble::before { content: ""; position: absolute; left: 1px; top: 0; width: 73px; height: 73px; border-radius: 50%; background: #fff; }
.bubble-wheel { position: absolute; left: 7px; top: 6px; width: 62px; height: 62px; }
.bubble-tag { position: absolute; left: 0; top: 52px; width: 77px; height: 25px; border-radius: 3px; background: linear-gradient(90deg, #f28a5e, #ef6f4a); color: #fff; font-size: 17px; font-weight: 700; line-height: 25px; text-align: center; white-space: nowrap; }

.ibeam { position: absolute; left: 736px; top: 626px; width: 12px; height: 24px; fill: none; stroke: #222; stroke-width: 1.300; }

/* taskbar */
.taskbar { height: 56px; flex: none; display: flex; align-items: center; gap: 5px; padding-left: 11px; border-top: 1px solid #3a4c5a; background: linear-gradient(90deg, #2d6f9c 0, #3a85b2 84px, #6fb5dc 350px, #60aad6 640px, #3a8ccb 800px, #2a7cbd 1100px, #2a78b8 1224px, #b6daf8 1226px, #aed2f0 1450px, #8aa9c2 1700px, #8aa4ba 1920px); }
.orb { width: 52px; height: 52px; margin-right: 15px; border-radius: 50%; background: radial-gradient(circle at 50% 40%, #7fb8d8, #23648e 70%); border: 1px solid #a6cfe2; display: flex; align-items: center; justify-content: center; }
.orb svg { width: 30px; height: 30px; }
.task { width: 82px; height: 54px; flex: none; display: flex; align-items: center; justify-content: center; border: 1px solid #3b6f90; border-radius: 3px; background: linear-gradient(#8ac4e2, #5ca5cf); }
.task-active { background: linear-gradient(#d7ebf5, #95c6de); border-color: #1d3646; box-shadow: inset 0 0 0 1px #fff; }
.task-wheel { width: 48px; height: 48px; }
.task-ming { width: 45px; height: 47px; border-radius: 5px; background: conic-gradient(from 20deg, #2fd0b0, #2fa8e8, #3050d0, #e83a30, #f07020, #f4d21f, #c8d030, #2fd0b0); display: flex; flex-direction: column; align-items: center; justify-content: center; }
.task-ming svg { width: 33px; height: 10px; }
.ming-text { width: 31px; height: 27px; background: #fff; color: #4a6a7a; font-size: 22px; font-weight: 700; line-height: 26px; text-align: center; }
.task-bili { width: 45px; height: 47px; }
.tray { margin-left: auto; display: flex; align-items: center; }
.tray svg { width: 20px; height: 28px; margin-left: 14px; }
.tri-tray { width: 0; height: 0; margin-right: 2px; border: 6px solid transparent; border-bottom: 7px solid #eef3f7; border-top: 0; }
.clock { width: 100px; margin-left: 16px; display: flex; flex-direction: column; align-items: center; gap: 6px; color: #f2f6fa; font-size: 17px; line-height: 19px; font-family: "Noto Sans", sans-serif; white-space: nowrap; }
.show-desktop { width: 21px; height: 54px; margin-left: 3px; background: linear-gradient(90deg, #95b4cc, #a9c6dc); border-left: 1px solid #bcd; }
```
